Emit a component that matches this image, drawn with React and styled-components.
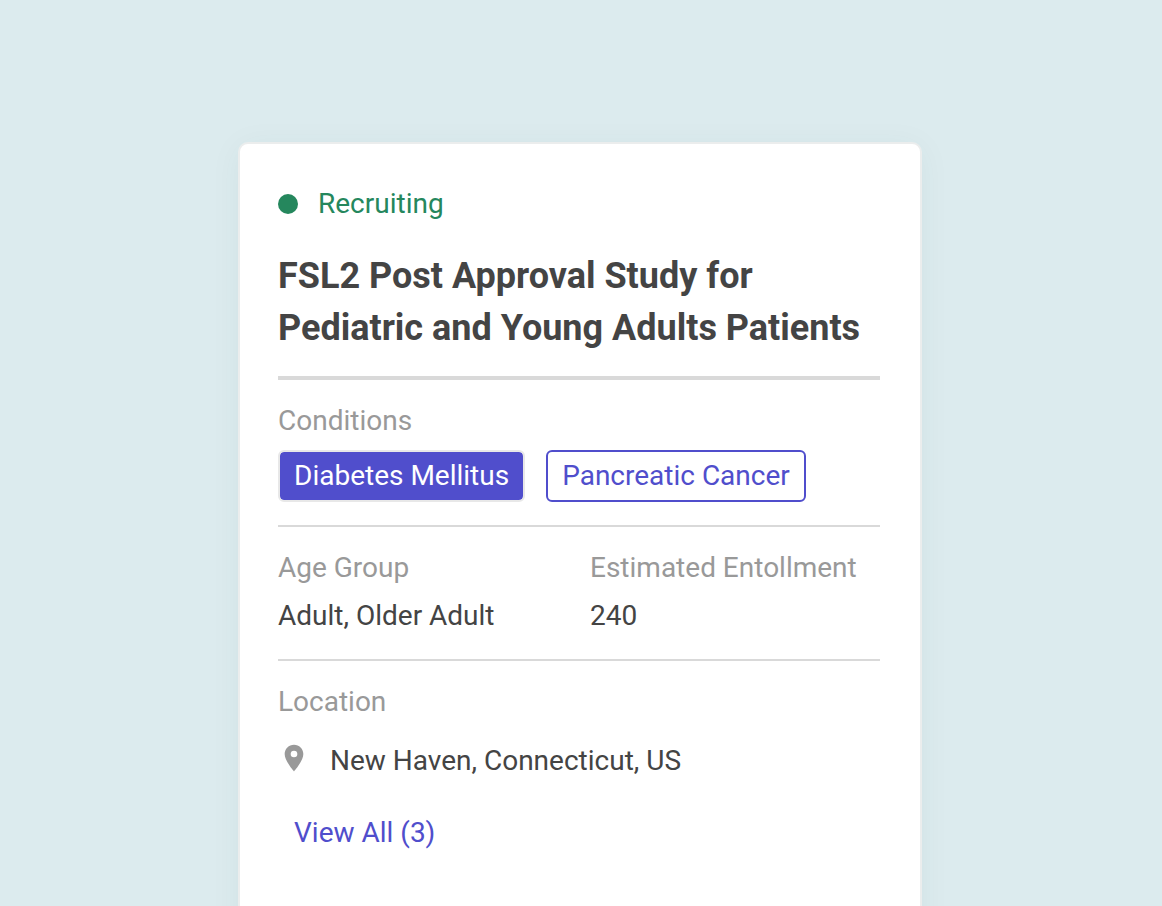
import React from "react";
import styled, { createGlobalStyle } from "styled-components";

const GlobalStyle = createGlobalStyle`
  *, *::before, *::after { box-sizing: border-box; }
  body {
    margin: 0;
    background: #dcebee;
    color: #444;
    font-family: Roboto, "Liberation Sans", sans-serif;
    font-size: 28px;
    line-height: 40px;
  }
`;

const Page = styled.main`
  display: flex;
  justify-content: center;
  height: 100vh;
  padding: 142px 22px 0 20px;
  overflow: hidden;
`;

const Card = styled.article`
  flex: 0 1 684px;
  min-height: 100vh;
  padding: 40px 40px 40px 38px;
  background: #fff;
  border: 2px solid #ebeded;
  border-radius: 10px;
  box-shadow: 0 4px 32px rgba(0, 70, 70, 0.05);
`;

const Status = styled.p`
  display: flex;
  align-items: center;
  gap: 20px;
  margin: 0 0 26px;
  color: #25875d;
`;

const Dot = styled.span`
  width: 20px;
  height: 20px;
  border-radius: 50%;
  background: currentColor;
`;

const Title = styled.h1`
  margin: 0;
  padding-bottom: 22px;
  border-bottom: 4px solid #d9d9d9;
  font-size: 36px;
  font-weight: 700;
  line-height: 52px;
`;

const Section = styled.section`
  padding: 21px 0 23px;
  border-bottom: ${({ $last }) => ($last ? "0" : "2px solid #d9d9d9")};
`;

const Label = styled.h2`
  margin: 0;
  color: #999;
  font-size: 28px;
  font-weight: 400;
  line-height: 40px;
`;

const Tags = styled.div`
  display: flex;
  flex-wrap: wrap;
  gap: 21px;
  margin-top: 9px;
`;

const Tag = styled.button`
  padding: 4px 14px;
  border: 2px solid ${({ $active }) => ($active ? "#e8e8e8" : "#504ecc")};
  border-radius: 6px;
  background: ${({ $active }) => ($active ? "#504ecc" : "#fff")};
  background-clip: padding-box;
  color: ${({ $active }) => ($active ? "#fff" : "#504ecc")};
  font: inherit;
  cursor: pointer;
`;

const Facts = styled.div`
  display: grid;
  grid-template-columns: 1fr 1fr;
  gap: 22px;
`;

const Value = styled.p`
  margin: 8px 0 0;
`;

const Place = styled.p`
  display: flex;
  align-items: flex-start;
  gap: 20px;
  margin: 19px 0 0;
`;

const PinIcon = styled.svg`
  flex: none;
  width: 32px;
  height: 34px;
  fill: #999;
`;

const ViewAll = styled.a`
  display: inline-block;
  margin-top: 32px;
  padding: 0 16px;
  color: #504ecc;
  text-decoration: none;
`;

export default function App() {
  return (
    <>
      <GlobalStyle />
      <Page>
        <Card>
          <Status><Dot />Recruiting</Status>
          <Title>FSL2 Post Approval Study for Pediatric and Young Adults Patients</Title>
          <Section>
            <Label>Conditions</Label>
            <Tags>
              <Tag type="button" $active>Diabetes Mellitus</Tag>
              <Tag type="button">Pancreatic Cancer</Tag>
            </Tags>
          </Section>
          <Section>
            <Facts>
              <div><Label>Age Group</Label><Value>Adult, Older Adult</Value></div>
              <div><Label>Estimated Entollment</Label><Value>240</Value></div>
            </Facts>
          </Section>
          <Section $last>
            <Label>Location</Label>
            <Place>
              <PinIcon viewBox="0 0 24 24" aria-hidden="true">
                <path d="M12 2C8.13 2 5 5.13 5 9c0 5.25 7 13 7 13s7-7.75 7-13c0-3.87-3.13-7-7-7zm0 9.5a2.5 2.5 0 0 1 0-5 2.5 2.5 0 0 1 0 5z" />
              </PinIcon>
              New Haven, Connecticut, US
            </Place>
            <ViewAll href="#locations">View All (3)</ViewAll>
          </Section>
        </Card>
      </Page>
    </>
  );
}
